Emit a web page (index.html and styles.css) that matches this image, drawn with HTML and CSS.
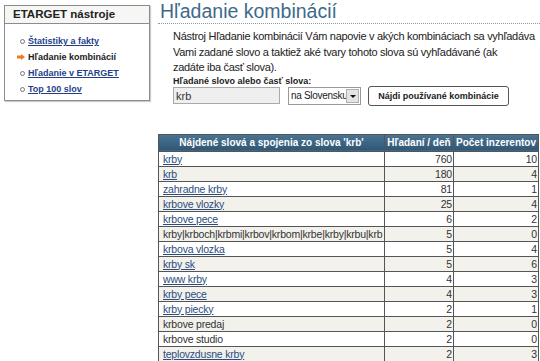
FILE: index.html
```html
<!DOCTYPE html>
<html lang="sk">
<head>
    <meta charset="UTF-8">
    <title>Hľadanie kombinácií</title>
    <link rel="stylesheet" href="styles.css">
</head>
<body>
    <div class="page">
        <div class="sidebar">
            <div class="box">
                <div class="box-title">ETARGET nástroje</div>
                <ul class="tools">
                    <li><a href="#">Štatistiky a fakty</a></li>
                    <li class="active">Hľadanie kombinácií</li>
                    <li><a href="#">Hľadanie v ETARGET</a></li>
                    <li><a href="#">Top 100 slov</a></li>
                </ul>
            </div>
        </div>

        <div class="main">
            <h1>Hľadanie kombinácií</h1>

            <p class="intro">Nástroj Hľadanie kombinácií Vám napovie v akých kombináciach sa vyhľadáva Vami zadané slovo a taktiež aké tvary tohoto slova sú vyhľadávané (ak<br>zadáte iba časť slova).</p>

            <form class="search-form">
                <label for="word">Hľadané slovo alebo časť slova:</label>
                <div class="form-row">
                    <input type="text" id="word" value="krb">
                    <span class="select-wrap">
                        <select>
                            <option>na Slovensku</option>
                        </select>
                        <span class="select-arrow"></span>
                    </span>
                    <button type="button">Nájdi používané kombinácie</button>
                </div>
            </form>

            <table class="results">
                <colgroup>
                    <col class="col-word">
                    <col class="col-num">
                    <col class="col-ads">
                </colgroup>
                <thead>
                    <tr>
                        <th>Nájdené slová a spojenia zo slova 'krb'</th>
                        <th>Hľadaní / deň</th>
                        <th>Počet inzerentov</th>
                    </tr>
                </thead>
                <tbody>
                    <tr><td><a href="#">krby</a></td><td class="num">760</td><td class="num">10</td></tr>
                    <tr><td><a href="#">krb</a></td><td class="num">180</td><td class="num">4</td></tr>
                    <tr><td><a href="#">zahradne krby</a></td><td class="num">81</td><td class="num">1</td></tr>
                    <tr><td><a href="#">krbove vlozky</a></td><td class="num">25</td><td class="num">4</td></tr>
                    <tr><td><a href="#">krbove pece</a></td><td class="num">6</td><td class="num">2</td></tr>
                    <tr><td>krby|krboch|krbmi|krbov|krbom|krbe|krby|krbu|krb</td><td class="num">5</td><td class="num">0</td></tr>
                    <tr><td><a href="#">krbova vlozka</a></td><td class="num">5</td><td class="num">4</td></tr>
                    <tr><td><a href="#">krby sk</a></td><td class="num">5</td><td class="num">6</td></tr>
                    <tr><td><a href="#">www krby</a></td><td class="num">4</td><td class="num">3</td></tr>
                    <tr><td><a href="#">krby pece</a></td><td class="num">4</td><td class="num">3</td></tr>
                    <tr><td><a href="#">krby piecky</a></td><td class="num">2</td><td class="num">1</td></tr>
                    <tr><td>krbove predaj</td><td class="num">2</td><td class="num">0</td></tr>
                    <tr><td>krbove studio</td><td class="num">2</td><td class="num">0</td></tr>
                    <tr><td><a href="#">teplovzdusne krby</a></td><td class="num">2</td><td class="num">3</td></tr>
                    <tr><td><a href="#">krbove kachle</a></td><td class="num">2</td><td class="num">2</td></tr>
                </tbody>
            </table>
        </div>
    </div>
</body>
</html>
```

FILE: styles.css
```css
body {
    margin: 0;
    font-family: "Liberation Sans", Arial, sans-serif;
    font-size: 10.5px;
    color: #333;
    background-color: #fff;
}
a {
    color: #2b4c7e;
}
.page {
    display: flex;
    align-items: flex-start;
}
.sidebar {
    width: 146px;
    padding: 5px 0 0 4px;
    flex-shrink: 0;
}
.box {
    border: 1px solid #8c8c8c;
    box-shadow: 1px 1px 1px #ccc;
}
.box-title {
    height: 17px;
    line-height: 17px;
    padding-left: 8px;
    font-weight: bold;
    font-size: 11.5px;
    color: #222;
    background-color: #f6f6f4;
    border-bottom: 1px solid #8c8c8c;
}
.tools {
    list-style: none;
    margin: 0;
    padding: 9px 0 3px 14px;
}
.tools li {
    height: 16px;
    line-height: 16px;
    font-size: 9px;
    font-weight: bold;
    color: #222;
    padding-left: 9px;
    position: relative;
}
.tools li::before {
    content: "";
    position: absolute;
    left: 1px;
    top: 6px;
    width: 3px;
    height: 3px;
    border: 1px solid #777;
    border-radius: 50%;
}
.tools li.active::before {
    left: -2px;
    top: 5px;
    width: 8px;
    height: 6px;
    border: none;
    border-radius: 0;
    background-color: #f07a22;
    clip-path: polygon(0 25%, 50% 25%, 50% 0, 100% 50%, 50% 100%, 50% 75%, 0 75%);
}
.tools a {
    color: #1f3f8a;
}
.main {
    flex: 1;
    min-width: 0;
    padding-left: 8px;
}
h1 {
    margin: 0;
    padding: 1px 0 2px 2px;
    font-size: 19.5px;
    font-weight: normal;
    color: #3d6a8a;
    border-bottom: 1px dotted #8a9aa6;
    line-height: 20px;
}
.intro {
    margin: 5px 0 0 15px;
    font-size: 11px;
    letter-spacing: -0.3px;
    line-height: 15.5px;
    color: #222;
}
.search-form {
    margin: 0 0 0 15px;
}
.search-form label {
    display: block;
    font-size: 9px;
    font-weight: bold;
    color: #222;
    margin-bottom: 0;
}
.form-row {
    display: flex;
    align-items: center;
}
.form-row input {
    width: 101px;
    height: 15px;
    padding: 0 2px;
    border: 1px solid #aaa;
    background-color: #efefef;
    font-family: inherit;
    font-size: 11px;
    color: #333;
    margin: 0 8px 0 0;
}
.select-wrap {
    position: relative;
    display: flex;
    margin-right: 7px;
}
.select-wrap select {
    appearance: none;
    width: 73px;
    height: 18px;
    font-family: inherit;
    font-size: 10px;
    letter-spacing: -0.3px;
    color: #222;
    border: 1px solid #999;
    border-radius: 0;
    background-color: #fff;
    margin: 0;
    padding: 0 0 0 2px;
}
.select-arrow {
    position: absolute;
    right: 2px;
    top: 2px;
    width: 13px;
    height: 14px;
    background-color: #e4e4e4;
    border: 1px solid #b0b0b0;
    box-sizing: border-box;
    pointer-events: none;
}
.select-arrow::after {
    content: "";
    position: absolute;
    left: 3px;
    top: 5px;
    border-left: 3px solid transparent;
    border-right: 3px solid transparent;
    border-top: 3px solid #111;
}
.form-row button {
    width: 141px;
    height: 20px;
    border: 1px solid #555;
    border-radius: 3px;
    background-color: #fff;
    font-family: inherit;
    font-size: 9px;
    font-weight: bold;
    color: #222;
    padding: 0;
    white-space: nowrap;
}
.results {
    margin-top: 28px;
    border-collapse: collapse;
    table-layout: fixed;
    width: 380px;
}
.col-word {
    width: 226px;
}
.col-num {
    width: 69px;
}
.col-ads {
    width: 85px;
}
.results th {
    background: linear-gradient(#4b7493, #2f5775);
    color: #fff;
    font-size: 10px;
    font-weight: bold;
    height: 16px;
    padding: 0 1px;
    border: 1px solid #555;
    white-space: nowrap;
    overflow: hidden;
}
.results td {
    height: 14px;
    line-height: 14px;
    padding: 0 2px 0 4px;
    border: 1px solid #555;
    color: #333;
    letter-spacing: -0.2px;
    white-space: nowrap;
    overflow: hidden;
}
.results tbody tr:nth-child(even) td {
    background-color: #f2f1ec;
}
.results td.num {
    text-align: right;
    padding-right: 1px;
}
```
